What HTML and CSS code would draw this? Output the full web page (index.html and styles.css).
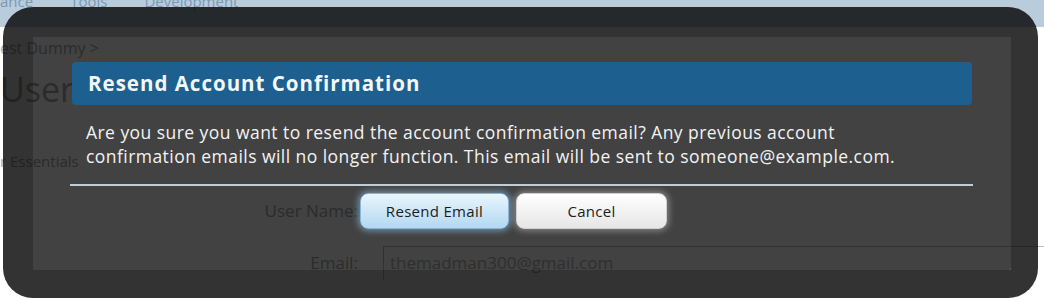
FILE: index.html
```html
<!DOCTYPE html>
<html lang="en">
<head>
<meta charset="utf-8">
<title>Resend Account Confirmation</title>
<link rel="stylesheet" href="styles.css">
</head>
<body>
<div class="page">
  <div class="topbar">
    <nav class="navtabs">
      <span class="navtab first">ance</span>
      <span class="navtab">Tools</span>
      <span class="navtab">Development</span>
    </nav>
  </div>
  <div class="crumbs">est Dummy &gt;</div>
  <h1 class="title">User</h1>
  <div class="tabs">r Essentials</div>
  <div class="form">
    <div class="row">
      <span class="label">User Name:</span>
      <span class="value"></span>
    </div>
    <div class="row row-email">
      <span class="label">Email:</span>
      <span class="value"><span class="input">themadman300@gmail.com</span></span>
    </div>
  </div>
</div>

<div class="overlay">
  <div class="modal">
    <h2 class="modal-head">Resend Account Confirmation</h2>
    <p class="modal-text">Are you sure you want to resend the account confirmation email? Any previous account<br>confirmation emails will no longer function. This email will be sent to someone@example.com.</p>
    <div class="modal-sep"></div>
    <div class="modal-actions">
      <button class="btn btn-primary" type="button">Resend Email</button>
      <button class="btn btn-cancel" type="button">Cancel</button>
    </div>
  </div>
</div>
</body>
</html>
```

FILE: styles.css
```css
html, body {
  margin: 0;
  padding: 0;
}
body {
  background: #ffffff;
  font-family: "Open Sans", "Noto Sans", sans-serif;
  width: 1044px;
  height: 300px;
  overflow: hidden;
  position: relative;
}

/* ---------- page underneath ---------- */
.page {
  color: #a8a8a8;
}
.topbar {
  display: flow-root;
  height: 27px;
  background: #b8ccdc;
}
.navtabs {
  display: flex;
  gap: 37px;
  margin-top: -8px;
  font-size: 15px;
  line-height: 18px;
  color: #7c99b3;
}
.crumbs {
  margin-top: 11px;
  font-size: 16px;
  line-height: 20px;
}
.title {
  margin: 11px 0 0 0;
  font-size: 34px;
  line-height: 40px;
  font-weight: normal;
}
.tabs {
  margin-top: 42px;
  font-size: 15px;
  line-height: 20px;
}
.form {
  font-size: 17px;
  line-height: 24px;
}
.row {
  display: grid;
  grid-template-columns: 358px 1fr;
  align-items: center;
}
.row:first-child {
  margin-top: 28px;
}
.row-email {
  margin-top: 23px;
}
.label {
  text-align: right;
}
.input {
  display: block;
  margin-left: 25px;
  padding: 4px 6px;
  border: 1px solid #bcbcbc;
  border-right: none;
  border-bottom-color: transparent;
  color: #b4b4b4;
}

/* ---------- overlay ---------- */
.overlay {
  position: absolute;
  left: 3px;
  top: 7px;
  width: 1035px;
  height: 291px;
  box-sizing: border-box;
  border-style: solid;
  border-color: rgba(0, 0, 0, 0.8);
  border-width: 30px 27px 28px 30px;
  border-radius: 30px;
  background: rgba(0, 0, 0, 0.74);
  background-clip: padding-box;
}
.modal {
  padding: 25px 39px 0 39px;
}
.modal-head {
  margin: 0;
  height: 43px;
  line-height: 43px;
  padding-left: 16px;
  background: #1d5f8e;
  border-radius: 4px;
  color: #f2f8fc;
  font-size: 20.5px;
  letter-spacing: 1px;
  font-weight: bold;
}
.modal-text {
  margin: 15px 0 0 0;
  padding-left: 14px;
  font-size: 17.5px;
  letter-spacing: 0.45px;
  line-height: 24px;
  color: #f2f2f2;
  white-space: nowrap;
}
.modal-text-2 {
  letter-spacing: 0.55px;
}
.modal-sep {
  margin: 16px -1px 0 -2px;
  height: 2px;
  background: #c3ccd6;
}
.modal-actions {
  display: flex;
  gap: 7px;
  margin-top: 7px;
  padding-left: 288px;
}
.btn {
  height: 36px;
  border-radius: 8px;
  font-family: "Open Sans", "Noto Sans", sans-serif;
  font-size: 15px;
  letter-spacing: 0.3px;
  color: #1c1c1c;
  cursor: pointer;
}
.btn-primary {
  width: 149px;
  background: linear-gradient(#eaf5fd, #b2d8f1);
  border: 1px solid #86b6da;
  box-shadow: 0 0 6px 2px rgba(150, 205, 245, 0.55);
}
.btn-cancel {
  width: 151px;
  background: linear-gradient(#ffffff, #e6e6e6);
  border: 1px solid #cfcfcf;
  box-shadow: 0 0 6px 2px rgba(255, 255, 255, 0.35);
}
```
